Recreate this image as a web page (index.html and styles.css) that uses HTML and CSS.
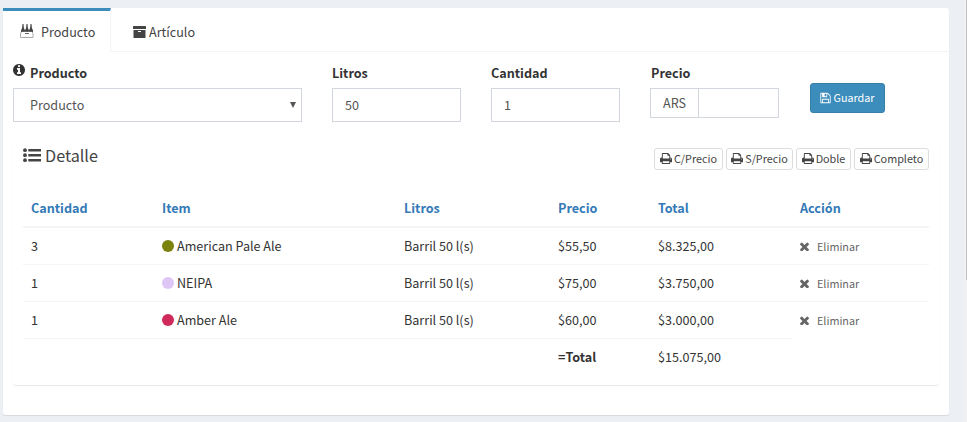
FILE: index.html
```html
<!DOCTYPE html>
<html lang="es">
<head>
<meta charset="utf-8">
<title>Producto</title>
<link rel="stylesheet" href="styles.css">
</head>
<body>
<svg class="defs" width="0" height="0">
  <symbol id="print" viewBox="64 0 1664 1792"><path d="M448 1536h896v-256h-896v256zm0-640h896v-384h-160q-40 0-68-28t-28-68v-160h-640v640zm1152 64q0-26-19-45t-45-19-45 19-19 45 19 45 45 19 45-19 19-45zm128 0v416q0 13-9.500 22.500t-22.500 9.500h-224v160q0 40-28 68t-68 28h-960q-40 0-68-28t-28-68v-160h-224q-13 0-22.500-9.500t-9.500-22.500v-416q0-79 56.500-135.500t135.500-56.500h64v-544q0-40 28-68t68-28h672q40 0 88 20t76 48l152 152q28 28 48 76t20 88v256h64q79 0 135.500 56.500t56.500 135.500z"/></symbol>
  <symbol id="times" viewBox="302 302 1188 1188"><path d="M1490 1322q0 40-28 68l-136 136q-28 28-68 28t-68-28l-294-294-294 294q-28 28-68 28t-68-28l-136-136q-28-28-28-68t28-68l294-294-294-294q-28-28-28-68t28-68l136-136q28-28 68-28t68 28l294 294 294-294q28-28 68-28t68 28l136 136q28 28 28 68t-28 68l-294 294 294 294q28 28 28 68z"/></symbol>
</svg>
<main class="card">
  <nav class="tabs">
    <a class="tab active"><svg class="crate" width="14" height="15" viewBox="0 0 14 15"><path d="M2.500 0h1l.4 4 .9 2v2H1.200V6l.9-2zM6.500 0h1l.4 4 .9 2v2H5.200V6l.9-2zM10.500 0h1l.4 4 .9 2v2H9.200V6l.9-2z" fill="#444"/><path d="M2 7.500L.5 9V13.500h12.500V9l-1.500-1.500z" fill="#fff" stroke="#aaa"/><path d="M1.200 6h3.600v1.800H1.200zM5.200 6h3.600v1.800H5.200zM9.200 6h3.600v1.800H9.200z" fill="#444"/><path d="M5 9.500h4" stroke="#666"/></svg><span>Producto</span></a>
    <a class="tab"><svg width="13" height="12" viewBox="0 0 13 12"><path fill="#444" fill-rule="evenodd" d="M.5 0h12q.5 0 .5.5V3H0V.5Q0 0 .5 0zM.5 4h12v7.500q0 .5-.5.5H1q-.5 0-.5-.5zM5 5v1h3V5z"/></svg><span>Artículo</span></a>
  </nav>
  <form class="fields">
    <div class="field"><label><svg class="info" width="12" height="12" viewBox="128 128 1536 1536"><path d="M1152 1376v-160q0-14-9-23t-23-9h-96v-512q0-14-9-23t-23-9h-320q-14 0-23 9t-9 23v160q0 14 9 23t23 9h96v320h-96q-14 0-23 9t-9 23v160q0 14 9 23t23 9h448q14 0 23-9t9-23zm-128-896v-160q0-14-9-23t-23-9h-192q-14 0-23 9t-9 23v160q0 14 9 23t23 9h192q14 0 23-9t9-23zm640 416q0 209-103 385.500t-279.500 279.500-385.500 103-385.500-103-279.500-279.500-103-385.500 103-385.500 279.500-279.500 385.500-103 385.500 103 279.500 279.500 103 385.500z"/></svg>Producto</label><div class="control select"><span>Producto</span><svg width="6" height="6" viewBox="0 0 6 6"><path d="M0 0h6L3 6z"/></svg></div></div>
    <div class="field"><label>Litros</label><div class="control">50</div></div>
    <div class="field"><label>Cantidad</label><div class="control">1</div></div>
    <div class="field"><label class="price">Precio</label><div class="group"><span class="addon">ARS</span></div></div>
    <button type="button" class="save"><svg width="11" height="12" viewBox="128 0 1536 1792"><path d="M512 1536h768v-384h-768v384zm896 0h128v-896q0-14-10-38.500t-20-34.500l-281-281q-10-10-34-20t-39-10v416q0 40-28 68t-68 28h-576q-40 0-68-28t-28-68v-416h-128v1280h128v-416q0-40 28-68t68-28h832q40 0 68 28t28 68v416zm-384-928v-320q0-13-9.500-22.500t-22.500-9.500h-192q-13 0-22.500 9.500t-9.500 22.500v320q0 13 9.500 22.500t22.500 9.500h192q13 0 22.500-9.500t9.500-22.500zm640 32v928q0 40-28 68t-68 28h-1344q-40 0-68-28t-28-68v-1344q0-40 28-68t68-28h928q40 0 88 20t76 48l280 280q28 28 48 76t20 88z"/></svg>Guardar</button>
  </form>
  <section class="detail">
    <header class="head">
      <h3><svg width="18" height="15" viewBox="0 0 18 15"><path d="M5.300 1h12.700v2.500H5.300zM5.300 6h12.700v2.500H5.300zM5.300 11h12.700v2.500H5.300z"/><circle cx="2" cy="2.200" r="1.900"/><circle cx="2" cy="7.200" r="1.900"/><circle cx="2" cy="12.200" r="1.900"/></svg>Detalle</h3>
      <div class="actions">
        <button type="button" class="print p1"><svg><use href="#print"/></svg>C/Precio</button>
        <button type="button" class="print p2"><svg><use href="#print"/></svg>S/Precio</button>
        <button type="button" class="print p3"><svg><use href="#print"/></svg>Doble</button>
        <button type="button" class="print p4"><svg><use href="#print"/></svg>Completo</button>
      </div>
    </header>
    <table>
      <colgroup><col class="c1"><col class="c2"><col class="c3"><col class="c4"><col class="c5"><col class="c6"></colgroup>
      <thead><tr><th>Cantidad</th><th>Item</th><th>Litros</th><th>Precio</th><th>Total</th><th>Acción</th></tr></thead>
      <tbody>
        <tr><td>3</td><td><i class="dot olive"></i>American Pale Ale</td><td>Barril 50 l(s)</td><td>$55,50</td><td>$8.325,00</td><td class="remove"><svg><use href="#times"/></svg>Eliminar</td></tr>
        <tr><td>1</td><td><i class="dot lilac"></i>NEIPA</td><td>Barril 50 l(s)</td><td>$75,00</td><td>$3.750,00</td><td class="remove"><svg><use href="#times"/></svg>Eliminar</td></tr>
        <tr><td>1</td><td><i class="dot ruby"></i>Amber Ale</td><td>Barril 50 l(s)</td><td>$60,00</td><td>$3.000,00</td><td class="remove"><svg><use href="#times"/></svg>Eliminar</td></tr>
        <tr><td></td><td></td><td></td><td><b>=Total</b></td><td>$15.075,00</td></tr>
      </tbody>
    </table>
  </section>
</main>
<aside class="scroll"><div class="thumb"></div></aside>
</body>
</html>
```
FILE: styles.css
```css
* { box-sizing: border-box; }
body {
  margin: 0; height: 422px; overflow: hidden; background: #ecf0f5; color: #333;
  display: flex; justify-content: space-between;
  font: 12.6px/20px "Noto Sans CJK SC", "Open Sans", sans-serif;
}
svg { fill: currentColor; flex: none; }
.defs { position: absolute; }
.card { width: 946px; height: 407px; margin: 8px 0 0 3px; background: #fff; border-radius: 3px; box-shadow: 0 1px 1px rgba(0,0,0,.1); }
.tabs { display: flex; height: 44px; border-bottom: 1px solid #f4f4f4; color: #444; }
.tab { display: flex; align-items: center; height: 44px; padding: 4px 15px 0 22px; gap: 3px; }
.tab.active { width: 108px; padding: 1px 0 0 17px; gap: 7px; border-top: 3px solid #3c8dbc; border-right: 1px solid #f4f4f4; background: #fff; }
.crate { margin-top: -1px; }
.fields { display: grid; grid-template-columns: 289px 129px 129px 129px 75px; column-gap: 30px; padding: 11px 0 0 10px; height: 75px; }
label { display: flex; height: 25px; font-weight: 700; }
.price { padding-left: 1px; }
.info { margin: 1px 5px 0 0; }
.control, .group { height: 34px; border: 1px solid #d2d6de; color: #555; padding: 0 12px; line-height: 32px; }
.select { display: flex; justify-content: space-between; align-items: center; padding: 0 5px 0 16px; }
.group { height: 30px; padding: 0; line-height: 28px; }
.addon { display: block; width: 48px; height: 28px; border-right: 1px solid #d2d6de; padding-left: 12px; }
button { font-family: inherit; display: flex; align-items: center; justify-content: center; padding: 0 0 2px; white-space: nowrap; line-height: 16px; }
.save { width: 75px; height: 30px; margin: 20px 0 0 1px; background: #3c8dbc; border: 1px solid #367fa9; border-radius: 3px; color: #fff; font-size: 10.8px; gap: 2px; }
.save svg { margin-top: 1px; }
.detail { margin: 11px 10px 0; height: 247px; padding: 0 10px; border-radius: 3px; box-shadow: 0 1px 1px rgba(0,0,0,.1); }
.head { display: flex; justify-content: space-between; height: 52px; }
h3 { margin: 6px 0 0; display: flex; align-items: center; gap: 4px; height: 22px; font-size: 16.2px; font-weight: 400; color: #444; }
.actions { display: flex; gap: 3px; padding-top: 10px; }
.print { height: 22px; gap: 2px; font-size: 10.8px; color: #444; background: #fff; border: 1px solid #ddd; border-radius: 3px; }
.print svg { width: 12px; height: 13px; margin-top: 1px; }
.p1 { width: 69px; } .p2 { width: 67px; } .p3 { width: 55px; } .p4 { width: 75px; }
table { width: 906px; table-layout: fixed; border-collapse: separate; border-spacing: 0; }
.c1 { width: 131px; } .c2 { width: 242px; } .c3 { width: 154px; } .c4 { width: 100px; } .c5 { width: 142px; } .c6 { width: 137px; }
th, td { height: 37px; padding: 8px 8px 0; text-align: left; vertical-align: top; line-height: 20px; }
th { height: 38px; color: #337ab7; border-bottom: 2px solid #f4f4f4; }
td { border-bottom: 1px solid #f4f4f4; }
tr:nth-child(3) .remove, tr:last-child td { border-bottom: 0; }
.dot { display: inline-block; width: 12px; height: 12px; border-radius: 50%; margin-right: 3px; vertical-align: -1px; }
.olive { background: #7b820e; } .lilac { background: #dec6f5; } .ruby { background: #cf2a5b; }
.remove { font-size: 10.8px; color: #666; }
.remove svg { width: 9px; height: 9px; margin-right: 8px; vertical-align: 0; }
.scroll { width: 3px; background: #f1f1f1; }
.thumb { height: 280px; margin-left: 2px; background: #c1c1c1; }
```
